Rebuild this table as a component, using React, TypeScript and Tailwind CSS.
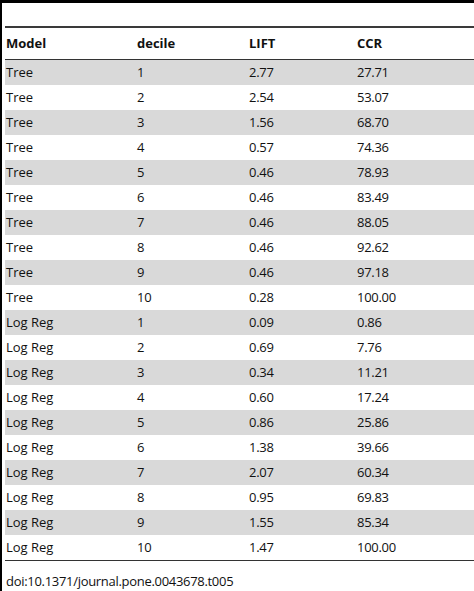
const rows: [string, string, string, string][] = [
  ['Tree', '1', '2.77', '27.71'],
  ['Tree', '2', '2.54', '53.07'],
  ['Tree', '3', '1.56', '68.70'],
  ['Tree', '4', '0.57', '74.36'],
  ['Tree', '5', '0.46', '78.93'],
  ['Tree', '6', '0.46', '83.49'],
  ['Tree', '7', '0.46', '88.05'],
  ['Tree', '8', '0.46', '92.62'],
  ['Tree', '9', '0.46', '97.18'],
  ['Tree', '10', '0.28', '100.00'],
  ['Log Reg', '1', '0.09', '0.86'],
  ['Log Reg', '2', '0.69', '7.76'],
  ['Log Reg', '3', '0.34', '11.21'],
  ['Log Reg', '4', '0.60', '17.24'],
  ['Log Reg', '5', '0.86', '25.86'],
  ['Log Reg', '6', '1.38', '39.66'],
  ['Log Reg', '7', '2.07', '60.34'],
  ['Log Reg', '8', '0.95', '69.83'],
  ['Log Reg', '9', '1.55', '85.34'],
  ['Log Reg', '10', '1.47', '100.00'],
];

const cols = 'grid grid-cols-[131px_112px_108px_1fr] pl-px';

export default function App() {
  return (
    <div
      className="w-[474px] h-[591px] bg-white border-l-2 border-t-[3px] border-black text-[13px] text-[#111] overflow-hidden"
      style={{ fontFamily: '"Open Sans", sans-serif' }}
    >
      <div className="h-[23px]" />
      <div className="pl-[3px]">
        <div className="border-t-2 border-[#3a3a3a]">
          <div className={`${cols} h-[32px] items-center font-bold border-b border-[#333]`}>
            <span>Model</span>
            <span>decile</span>
            <span>LIFT</span>
            <span>CCR</span>
          </div>
          {rows.map((r, i) => (
            <div
              key={i}
              className={`${cols} h-[25px] items-center ${i % 2 === 0 ? 'bg-[#d9d9d9]' : 'bg-white'}`}
            >
              {r.map((c, j) => (
                <span key={j} className={j > 0 ? 'tracking-[-0.3px]' : ''}>
                  {c}
                </span>
              ))}
            </div>
          ))}
          <div className="border-t border-[#333]" />
        </div>
        <div className="pl-px pt-[11px] leading-[18px] tracking-[-0.3px]">
          doi:10.1371/journal.pone.0043678.t005
        </div>
      </div>
    </div>
  );
}
